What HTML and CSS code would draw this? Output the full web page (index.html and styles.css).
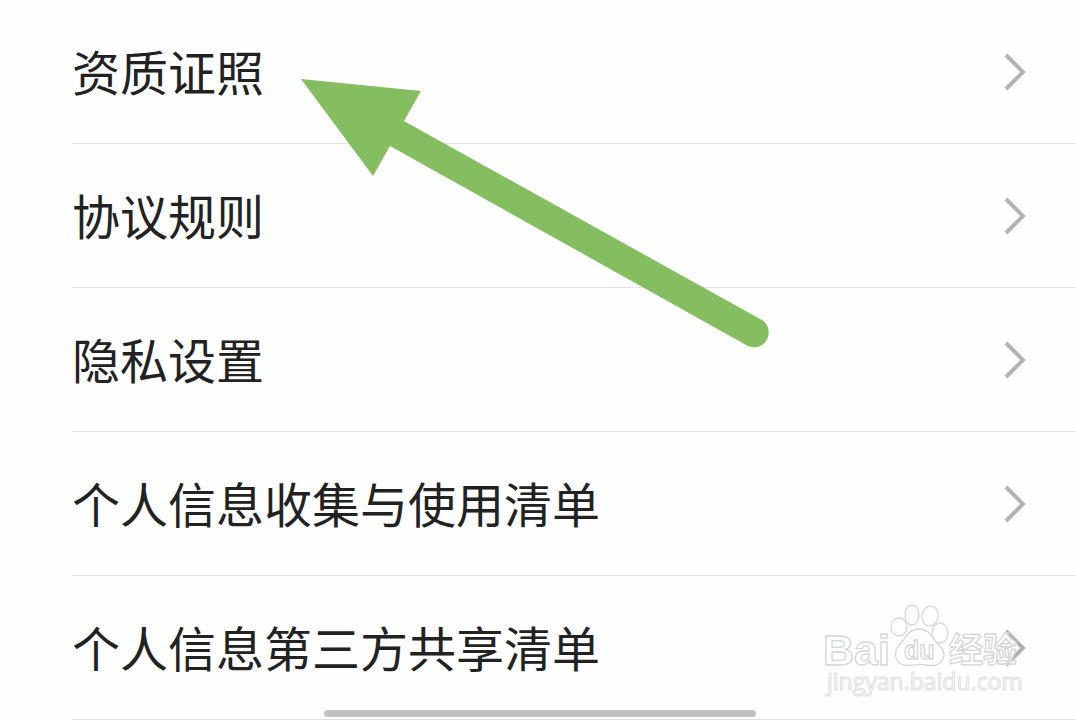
FILE: index.html
```html
<!DOCTYPE html>
<html lang="zh-CN">
<head>
<meta charset="utf-8">
<meta name="viewport" content="width=device-width, initial-scale=1">
<title>设置</title>
<link rel="stylesheet" href="styles.css">
</head>
<body>
<main class="screen">
  <nav class="list">
    <a class="row" href="#license"><span class="label">资质证照</span><svg class="chevron" viewBox="0 0 24 40" aria-hidden="true"><path d="M2 3 19 20 2 37"/></svg></a>
    <a class="row" href="#rules"><span class="label">协议规则</span><svg class="chevron" viewBox="0 0 24 40" aria-hidden="true"><path d="M2 3 19 20 2 37"/></svg></a>
    <a class="row" href="#privacy"><span class="label">隐私设置</span><svg class="chevron" viewBox="0 0 24 40" aria-hidden="true"><path d="M2 3 19 20 2 37"/></svg></a>
    <a class="row" href="#collect"><span class="label">个人信息收集与使用清单</span><svg class="chevron" viewBox="0 0 24 40" aria-hidden="true"><path d="M2 3 19 20 2 37"/></svg></a>
    <a class="row" href="#share"><span class="label">个人信息第三方共享清单</span><svg class="chevron" viewBox="0 0 24 40" aria-hidden="true"><path d="M2 3 19 20 2 37"/></svg></a>
  </nav>
  <svg class="arrow" viewBox="0 0 480 280" aria-hidden="true">
    <path d="M1 9 121 21 104 51 461 249.500A14 14 0 0 1 447 275.500L90 76 73 106Z"/>
  </svg>
  <svg class="watermark" viewBox="0 0 220 110" aria-hidden="true">
    <text class="brand" x="13" y="75">Bai</text>
    <g class="paw">
      <ellipse cx="89" cy="37" rx="8" ry="9"/>
      <ellipse cx="102" cy="25" rx="7" ry="10"/>
      <ellipse cx="120" cy="26" rx="8" ry="10" transform="rotate(12 120 26)"/>
      <ellipse cx="130" cy="43" rx="8" ry="10"/>
      <path d="M109 39C99 39 96 47 91 53C86 58 84 64 87 70C90 76 97 76 103 75C108 74 111 74 116 75C122 76 130 76 133 69C136 62 131 57 127 53C122 47 119 39 109 39Z"/>
    </g>
    <text class="du" x="94" y="69">du</text>
    <text class="sub" x="139" y="72">经验</text>
    <text class="url" x="17" y="100">jingyan.baidu.com</text>
  </svg>
  <div class="home-bar"></div>
</main>
</body>
</html>
```
FILE: styles.css
```css
body {
  margin: 0;
  background: #fefefe;
  color: #222;
  font-family: "Noto Sans CJK SC", sans-serif;
}

.screen {
  position: relative;
}

.list {
  display: flex;
  flex-direction: column;
  padding-left: 72px;
}

.row {
  display: flex;
  align-items: center;
  justify-content: space-between;
  box-sizing: border-box;
  min-height: 144px;
  padding-right: 48px;
  border-bottom: 1px solid #e2e2e2;
  color: inherit;
  text-decoration: none;
}

.label {
  margin-bottom: 4px;
  font-size: 48px;
  line-height: 72px;
}

.chevron {
  flex: none;
  width: 24px;
  height: 40px;
  fill: none;
  stroke: #b2b2b2;
  stroke-width: 4;
}

.arrow {
  position: absolute;
  top: 70px;
  left: 300px;
  width: 480px;
  height: 280px;
  fill: #85be61;
  pointer-events: none;
}

.watermark {
  position: absolute;
  right: 46px;
  bottom: 20px;
  width: 220px;
  height: 110px;
  overflow: visible;
  fill: rgba(255, 255, 255, 0.6);
  stroke: #d6d6d6;
  stroke-width: 1.3;
  pointer-events: none;
}

.brand {
  font: bold 43px "Liberation Sans", sans-serif;
}

.du {
  font: bold 25px "Liberation Sans", sans-serif;
}

.sub {
  font: bold 34px "Noto Sans CJK SC", sans-serif;
}

.url {
  font: 23px "Open Sans", sans-serif;
  stroke: #e0e0e0;
  stroke-width: 1;
}

.home-bar {
  position: absolute;
  right: 0;
  bottom: 3px;
  left: 3px;
  width: 432px;
  max-width: 60%;
  height: 7px;
  margin: 0 auto;
  border-radius: 4px;
  background: #c1c1c1;
}
```
